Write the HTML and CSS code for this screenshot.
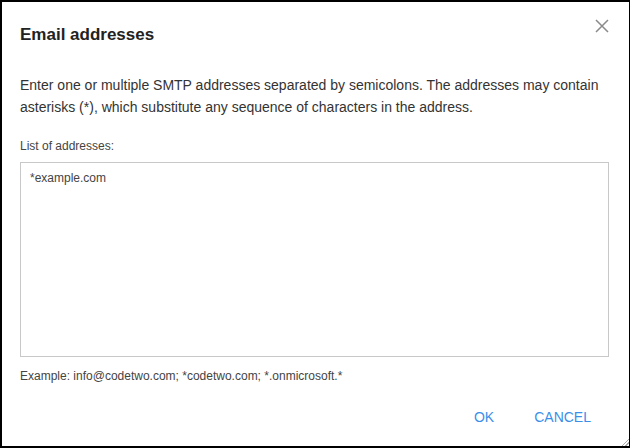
FILE: index.html
```html
<!DOCTYPE html>
<html>
<head>
<meta charset="utf-8">
<link rel="stylesheet" href="styles.css">
</head>
<body>
<div class="dialog">
  <div class="header">
    <h1 class="title">Email addresses</h1>
    <button class="close" aria-label="Close">
      <svg width="14" height="14" viewBox="0 0 14 14"><path d="M1 1 L13 13 M13 1 L1 13" stroke="#8a8a8a" stroke-width="1.5" fill="none"/></svg>
    </button>
  </div>
  <p class="desc">Enter one or multiple SMTP addresses separated by semicolons. The addresses may contain asterisks (*), which substitute any sequence of characters in the address.</p>
  <div class="label">List of addresses:</div>
  <div class="textbox">*example.com</div>
  <div class="example">Example: info@codetwo.com; *codetwo.com; *.onmicrosoft.*</div>
  <div class="actions">
    <button class="btn">OK</button>
    <button class="btn">CANCEL</button>
  </div>
  <div class="grip"></div>
</div>
</body>
</html>
```
FILE: styles.css
```css
html, body {
  margin: 0;
  padding: 0;
  background: #fff;
}
.dialog {
  position: relative;
  width: 630px;
  height: 448px;
  box-sizing: border-box;
  border: 1px solid #000;
  border-width: 2px 1px 2px 2px;
  padding: 0 20px 0 18px;
  font-family: "Liberation Sans", Arial, sans-serif;
  color: #333;
  display: flex;
  flex-direction: column;
}
.header {
  display: flex;
  align-items: center;
  justify-content: space-between;
  height: 48px;
  padding-top: 9px;
}
.title {
  margin: 0;
  font-size: 17px;
  font-weight: bold;
  color: #222;
}
.close {
  background: none;
  border: 0;
  padding: 0;
  width: 14px;
  height: 14px;
  display: flex;
  margin-top: -18px;
}
.desc {
  margin: 15px 0 0;
  font-size: 14px;
  line-height: 22px;
  color: #333;
}
.label {
  margin-top: 20px;
  font-size: 12px;
  line-height: 16px;
  color: #444;
}
.textbox {
  margin-top: 8px;
  height: 195px;
  box-sizing: border-box;
  border: 1px solid #c8c8c8;
  padding: 7px 9px;
  font-size: 12px;
  line-height: 16px;
  color: #444;
}
.example {
  margin-top: 11px;
  font-size: 12px;
  line-height: 16px;
  color: #444;
}
.actions {
  display: flex;
  justify-content: flex-end;
  gap: 40px;
  margin-top: 24px;
  padding-right: 18px;
}
.btn {
  background: none;
  border: 0;
  padding: 0;
  font-family: "Liberation Sans", Arial, sans-serif;
  font-size: 14px;
  line-height: 18px;
  color: #3b8fe9;
}
.grip {
  position: absolute;
  right: 0;
  bottom: 0;
  width: 8px;
  height: 8px;
  background: linear-gradient(135deg, transparent 55%, #aaa 55%, #aaa 62%, transparent 62%, transparent 75%, #aaa 75%, #aaa 82%, transparent 82%);
}
```
